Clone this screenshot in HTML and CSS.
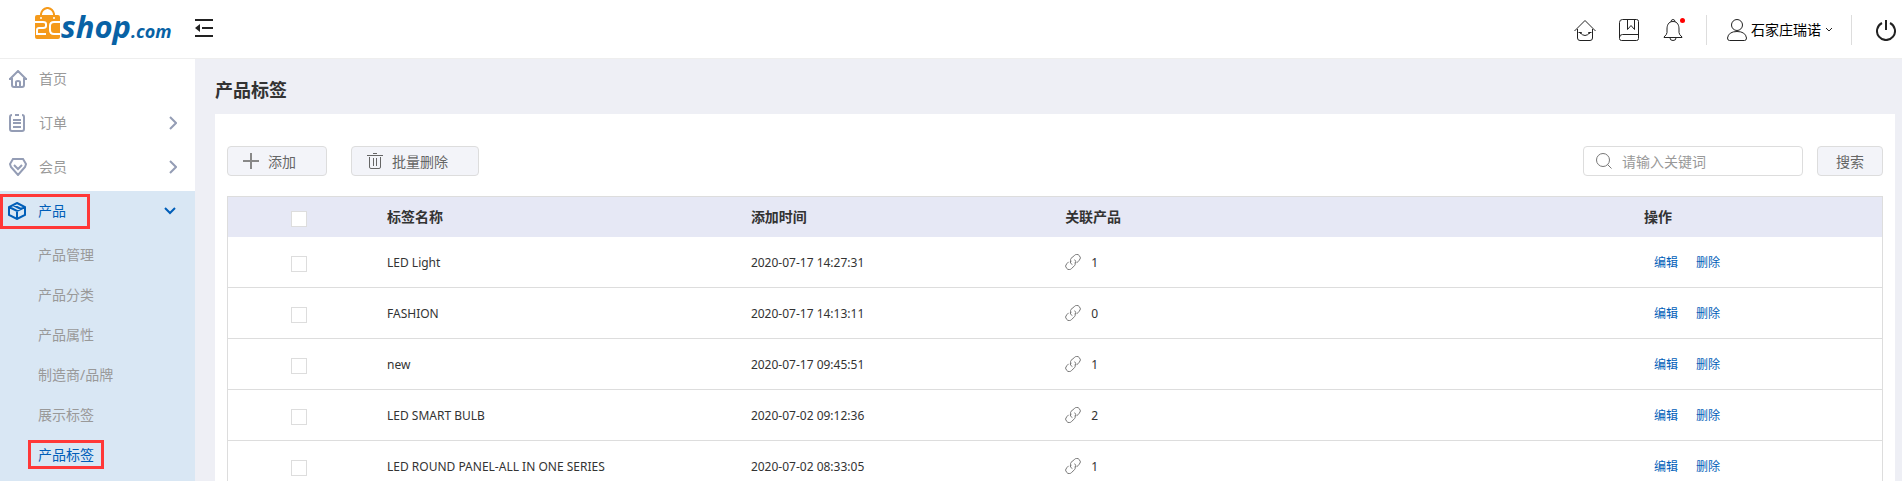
FILE: index.html
```html
<!DOCTYPE html>
<html lang="zh-CN">
<head>
    <meta charset="UTF-8">
    <meta name="viewport" content="width=device-width, initial-scale=1.0">
    <title>产品标签</title>
    <link rel="stylesheet" href="styles.css">
</head>
<body>
    <svg class="sprite" aria-hidden="true">
        <symbol id="link" viewBox="0 0 16 16">
            <path d="M6.4 7.2 5.6 6.6a2.8 2.8 0 0 1 .4-2.2L9.300 1.600a3.200 3.200 0 0 1 5 0 3.200 3.200 0 0 1 0 4.600l-2.800 2.900M9.600 8.800l.6.600a2.800 2.800 0 0 1-.6 2.200l-2.900 2.800a3.200 3.200 0 0 1-5 0 3.200 3.200 0 0 1 0-4.600l2-2M9.600 5.600a3 3 0 0 1 .6 3.800M5.600 6.600a3 3 0 0 0 1.800 4"/>
        </symbol>
        <symbol id="arrow" viewBox="0 0 8 14">
            <path d="M1 1l6 6-6 6"/>
        </symbol>
    </svg>

    <header class="header">
        <a class="logo" href="#" aria-label="2Cshop.com">
            <svg class="bag" width="26" height="33" viewBox="0 0 26 33">
                <path d="M6 9V7q1-5 6-6h1q5 1 6 6v2" fill="none" stroke="#f59a1b" stroke-width="2"/>
                <rect x="0" y="8" width="25" height="24" rx="2" fill="#f59a1b"/>
                <path d="M0 15h8q3 0 3 2v2q0 2-3 2H4q-2 0-2 2v4h9M25 15h-6q-4 0-4 4v4q0 4 4 4h6" fill="none" stroke="#fff" stroke-width="2"/>
                <circle cx="6" cy="11" r="1" fill="#fff"/>
                <circle cx="19" cy="11" r="1" fill="#fff"/>
            </svg>
            <span class="logo-shop">shop</span><span class="logo-com">.com</span>
        </a>
        <button class="icon-btn fold" type="button" aria-label="收起菜单">
            <svg width="18" height="18" viewBox="0 0 18 18">
                <path d="M0 1h18M7 9h11M0 17h18" fill="none" stroke="#222" stroke-width="2"/>
                <path d="M0 9l5-4v8z" fill="#222" stroke="none"/>
            </svg>
        </button>

        <nav class="tools">
            <a class="tool" href="#" aria-label="店铺">
                <svg width="22" height="22" viewBox="0 0 22 22">
                    <path d="M.5 12 11 1.500 21.500 12M3.500 10v9q0 2.500 2.500 2.500h10q2.500 0 2.500-2.500v-9M6 13.500q5 6 10 0M4.500 13.500h3l-1 1.500M17.500 13.500h-3l1 1.500"/>
                </svg>
            </a>
            <a class="tool" href="#" aria-label="手册">
                <svg width="22" height="22" viewBox="0 0 22 22">
                    <path d="M4.500.5h14q2 0 2 2v17q0 2-2 2h-15q-2 0-2-2v-16q0-3 3-3zM1.500 18.500q0-3 3-3h16M9.500.5v10l3.500-4 3.500 4V.5"/>
                </svg>
            </a>
            <a class="tool" href="#" aria-label="消息">
                <svg width="22" height="22" viewBox="0 0 22 22">
                    <path d="M11 2.500C6 2.500 5 7 5 10v3.500q0 2-3 4.500v.5h18V18q-3-2.500-3-4.500V10c0-3-1-7.500-6-7.500zM9 3q0-2.500 2-2.500T13 3M8 19q0 2.500 3 2.500t3-2.500"/>
                </svg>
                <span class="dot"></span>
            </a>
            <button class="user" type="button">
                <svg width="20" height="22" viewBox="0 0 20 22">
                    <circle cx="10" cy="6" r="5.500"/>
                    <path d="M.5 19q1-6.500 9.500-6.500t9.500 6.500q0 2.500-2 2.500h-15q-2 0-2-2.500z"/>
                </svg>
                <span>石家庄瑞诺</span>
                <svg class="caret" width="8" height="6" viewBox="0 0 8 6"><path d="M1 1l3 3 3-3"/></svg>
            </button>
            <button class="icon-btn power" type="button" aria-label="退出">
                <svg width="20" height="22" viewBox="0 0 20 22">
                    <path d="M6 4a9 9 0 1 0 8 0M10 1v10"/>
                </svg>
            </button>
        </nav>
    </header>

    <div class="container">
        <aside class="sidebar">
            <a class="menu-item" href="#">
                <svg width="18" height="18" viewBox="0 0 18 18"><path d="M0 9h3v6q0 2 2 2h8q2 0 2-2V9h3M1 9l8-8 8 8M7 16v-4q0-1 2-1t2 1v4"/></svg>
                <span>首页</span>
            </a>
            <a class="menu-item" href="#">
                <svg width="18" height="18" viewBox="0 0 18 18"><path d="M3 1Q1 1 1 3v12q0 2 2 2h10q2 0 2-2V3q0-2-2-2M6 1h4M4 6h8M4 9h8M4 13h8"/></svg>
                <span>订单</span>
                <svg class="arrow" width="8" height="14"><use href="#arrow"/></svg>
            </a>
            <a class="menu-item" href="#">
                <svg width="18" height="18" viewBox="0 0 18 18"><path d="M4 1h10l3 5-1 3-7 8-7-8-1-3zM5 7l4 4 4-4"/></svg>
                <span>会员</span>
                <svg class="arrow" width="8" height="14"><use href="#arrow"/></svg>
            </a>
            <div class="menu-group">
                <a class="menu-item active" href="#">
                    <svg width="18" height="18" viewBox="0 0 18 18"><path d="M9 1l8 4v8l-8 4-8-4V5zM1 5l8 4 8-4M9 9v8M5 3l8 4"/></svg>
                    <span>产品</span>
                    <svg class="arrow" width="14" height="8" viewBox="0 0 14 8"><path d="M2 1l5 5 5-5"/></svg>
                </a>
                <a class="sub-item" href="#"><span>产品管理</span></a>
                <a class="sub-item" href="#"><span>产品分类</span></a>
                <a class="sub-item" href="#"><span>产品属性</span></a>
                <a class="sub-item" href="#"><span>制造商/品牌</span></a>
                <a class="sub-item" href="#"><span>展示标签</span></a>
                <a class="sub-item active" href="#"><span>产品标签</span></a>
            </div>
        </aside>

        <main class="main">
            <h1>产品标签</h1>
            <section class="card">
                <div class="toolbar">
                    <button class="btn" type="button">
                        <svg width="16" height="16" viewBox="0 0 16 16"><path class="plus" d="M0 8h16M8 0v16"/></svg>
                        <span>添加</span>
                    </button>
                    <button class="btn" type="button">
                        <svg width="16" height="16" viewBox="0 0 16 16"><path d="M0 2.500h16M6 .5h4M2.500 4v10q0 1.500 1.500 1.500h8q1.500 0 1.500-1.500V4M6.500 5v8M9.500 5v8"/></svg>
                        <span>批量删除</span>
                    </button>
                    <form class="search">
                        <label class="search-box">
                            <svg width="16" height="16" viewBox="0 0 16 16"><circle cx="7" cy="7" r="6.500"/><path d="M11.500 11.500l4 4"/></svg>
                            <input type="text" name="keyword" placeholder="请输入关键词" aria-label="关键词">
                        </label>
                        <button class="btn search-btn" type="button">搜索</button>
                    </form>
                </div>

                <table class="list">
                    <thead>
                        <tr>
                            <th class="col-check"><input type="checkbox" aria-label="全选"></th>
                            <th class="col-name">标签名称</th>
                            <th class="col-time">添加时间</th>
                            <th class="col-link">关联产品</th>
                            <th class="col-action">操作</th>
                        </tr>
                    </thead>
                    <tbody>
                        <tr>
                            <td class="col-check"><input type="checkbox" aria-label="LED Light"></td>
                            <td>LED Light</td>
                            <td>2020-07-17 14:27:31</td>
                            <td><span class="count"><svg width="16" height="16"><use href="#link"/></svg>1</span></td>
                            <td class="actions"><a href="#">编辑</a><a href="#">删除</a></td>
                        </tr>
                        <tr>
                            <td class="col-check"><input type="checkbox" aria-label="FASHION"></td>
                            <td>FASHION</td>
                            <td>2020-07-17 14:13:11</td>
                            <td><span class="count"><svg width="16" height="16"><use href="#link"/></svg>0</span></td>
                            <td class="actions"><a href="#">编辑</a><a href="#">删除</a></td>
                        </tr>
                        <tr>
                            <td class="col-check"><input type="checkbox" aria-label="new"></td>
                            <td>new</td>
                            <td>2020-07-17 09:45:51</td>
                            <td><span class="count"><svg width="16" height="16"><use href="#link"/></svg>1</span></td>
                            <td class="actions"><a href="#">编辑</a><a href="#">删除</a></td>
                        </tr>
                        <tr>
                            <td class="col-check"><input type="checkbox" aria-label="LED SMART BULB"></td>
                            <td>LED SMART BULB</td>
                            <td>2020-07-02 09:12:36</td>
                            <td><span class="count"><svg width="16" height="16"><use href="#link"/></svg>2</span></td>
                            <td class="actions"><a href="#">编辑</a><a href="#">删除</a></td>
                        </tr>
                        <tr>
                            <td class="col-check"><input type="checkbox" aria-label="LED ROUND PANEL-ALL IN ONE SERIES"></td>
                            <td>LED ROUND PANEL-ALL IN ONE SERIES</td>
                            <td>2020-07-02 08:33:05</td>
                            <td><span class="count"><svg width="16" height="16"><use href="#link"/></svg>1</span></td>
                            <td class="actions"><a href="#">编辑</a><a href="#">删除</a></td>
                        </tr>
                    </tbody>
                </table>
            </section>
        </main>
    </div>
</body>
</html>
```
FILE: styles.css
```css
*, *::after{
    box-sizing: border-box;
}
html, body{
    height: 100%;
}
body{
    margin: 0;
    display: flex;
    flex-direction: column;
    overflow: hidden;
    background-color: #eeeff5;
    color: #333;
    font-family: "Noto Sans", "Noto Sans CJK SC", sans-serif;
    font-size: 14px;
}
a{
    color: inherit;
    text-decoration: none;
}
button, input{
    font-family: inherit;
    font-size: 14px;
    margin: 0;
}
button{
    cursor: pointer;
}
svg{
    flex: none;
    fill: none;
    stroke: currentColor;
}
.sprite{
    position: absolute;
    width: 0;
    height: 0;
}

/* header */
.header{
    display: flex;
    align-items: center;
    flex: none;
    height: 59px;
    padding: 0 6px 2px 35px;
    background-color: #fff;
    border-bottom: 1px solid #eee;
}
.logo{
    display: flex;
    align-items: baseline;
    width: 160px;
    color: #0862a5;
    font-family: "Open Sans", sans-serif;
    font-style: italic;
    font-weight: 700;
    line-height: 38px;
}
.bag{
    align-self: flex-start;
    stroke: none;
}
.logo-shop{
    font-size: 31px;
}
.logo-com{
    font-size: 18px;
}
.icon-btn{
    display: flex;
    padding: 0;
    border: none;
    background: none;
}
.tools{
    display: flex;
    align-items: center;
    margin-left: auto;
    padding-top: 3px;
    color: #222;
}
.tool{
    position: relative;
    display: flex;
    margin-right: 22px;
}
.dot{
    position: absolute;
    top: -1px;
    right: -1px;
    width: 5px;
    height: 5px;
    border-radius: 50%;
    background-color: #f00;
}
.user{
    display: flex;
    align-items: center;
    gap: 4px;
    height: 30px;
    padding: 0 18px 0 20px;
    border: 1px solid #ddd;
    border-width: 0 1px;
    background: none;
    color: #222;
}
.user span{
    padding-bottom: 2px;
    color: #000;
}
.power{
    margin-left: 24px;
    color: #222;
}
.power svg{
    stroke-width: 2;
}

/* sidebar */
.container{
    display: flex;
    flex: 1;
    min-height: 0;
}
.sidebar{
    display: flex;
    flex-direction: column;
    flex: none;
    width: 195px;
    background-color: #fff;
    color: #999;
}
.menu-item{
    position: relative;
    display: flex;
    align-items: center;
    gap: 12px;
    height: 40px;
    margin-bottom: 4px;
    padding: 0 18px 0 9px;
}
.menu-item span{
    padding-bottom: 2px;
}
.menu-item svg{
    color: #949db5;
    stroke-width: 2;
}
.menu-item .arrow{
    margin-left: auto;
}
.menu-group{
    flex: 1;
    background-color: #d9e7f4;
}
.menu-group .menu-item{
    padding-left: 8px;
}
.menu-item.active, .sub-item.active, .menu-item.active svg{
    color: #005eb8;
}
.sub-item{
    display: flex;
    align-items: center;
    height: 40px;
    padding: 0 0 2px 28px;
}
.sub-item span{
    padding: 0 10px;
}
/* red marker round the current entry */
.menu-item.active::after{
    content: "";
    position: absolute;
    top: 3px;
    left: 0;
    width: 90px;
    height: 35px;
    border: 3px solid #ff3838;
}
.sub-item.active span{
    padding: 0 7px;
    border: 3px solid #ff3838;
    line-height: 23px;
}

/* content */
.main{
    display: flex;
    flex-direction: column;
    flex: 1;
    min-width: 0;
    padding: 0 7px 0 20px;
}
.main h1{
    margin: 0;
    padding-top: 8px;
    font-size: 18px;
    line-height: 47px;
}
.card{
    flex: 1;
    padding: 32px 12px 0;
    background-color: #fff;
}
.toolbar{
    display: flex;
    gap: 24px;
    margin-bottom: 20px;
}
.btn{
    display: flex;
    align-items: center;
    gap: 9px;
    height: 30px;
    padding: 0 30px 0 15px;
    border: 1px solid #ddd;
    border-radius: 4px;
    background-color: #f3f4f9;
    color: #666;
}
.plus{
    stroke-width: 2;
    stroke: #888;
}
.search{
    display: flex;
    gap: 14px;
    margin-left: auto;
}
.search-box{
    display: flex;
    align-items: center;
    gap: 10px;
    width: 220px;
    height: 30px;
    padding: 0 12px;
    border: 1px solid #ddd;
    border-radius: 4px;
    color: #777;
}
.search-box input{
    flex: 1;
    min-width: 0;
    padding: 0;
    border: none;
    outline: none;
}
.search-box input::placeholder{
    color: #999;
}
.search-btn{
    padding: 0 18px;
}

/* table */
.list{
    width: 100%;
    table-layout: fixed;
    border: 1px solid #ddd;
    border-spacing: 0;
}
.list th{
    height: 40px;
    padding: 0 0 2px;
    background-color: #e6e8f5;
    text-align: left;
}
.list td{
    height: 51px;
    padding: 0;
    border-bottom: 1px solid #ddd;
    font-size: 12px;
}
.col-name{
    width: 22%;
}
.col-time{
    width: 19%;
}
.col-link{
    width: 35%;
}
.list .col-check{
    width: 159px;
    padding: 3px 0 0 63px;
}
.list input{
    appearance: none;
    display: block;
    width: 16px;
    height: 16px;
    border: 1px solid #ddd;
    background-color: #fff;
}
.count{
    display: flex;
    align-items: center;
    gap: 10px;
}
.count svg{
    color: #777;
}
.actions a{
    margin-left: 10px;
    margin-right: 8px;
    color: #005eb8;
}
```
